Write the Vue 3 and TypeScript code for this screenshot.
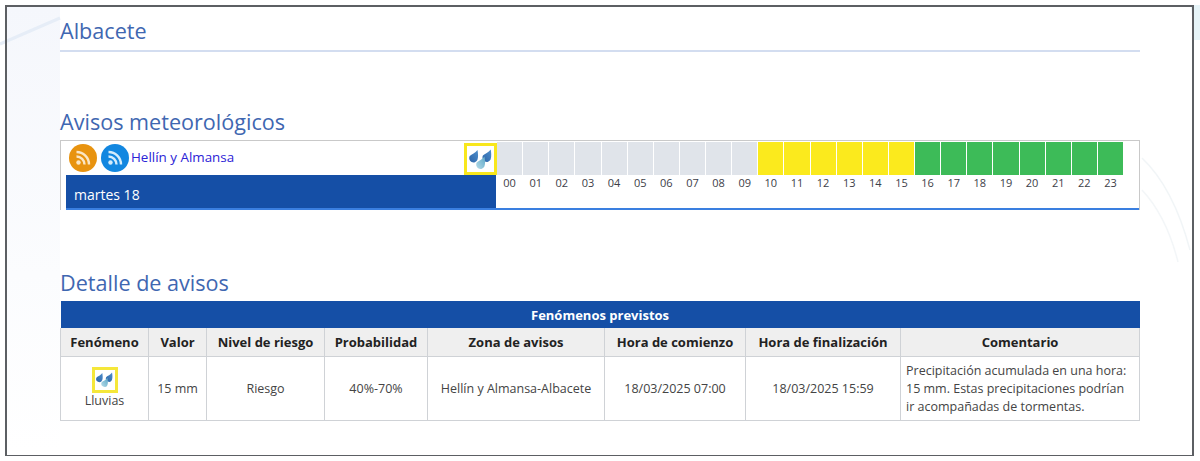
<script setup lang="ts">
const hours = Array.from({ length: 24 }, (_, i) => ({
  label: String(i).padStart(2, '0'),
  level: i < 10 ? 'none' : i < 16 ? 'yellow' : 'green',
}))

const columns = ['Fenómeno', 'Valor', 'Nivel de riesgo', 'Probabilidad', 'Zona de avisos', 'Hora de comienzo', 'Hora de finalización', 'Comentario']

const dropPath = 'M8.500 0C9 3 9.500 6.500 8.400 10A4.300 4.300 0 0 1 0.700 6.100C2.700 4.300 6.300 3.200 8.500 0Z'
const drops = [
  { move: 'translate(0 1)', fill: 'url(#dropDark)' },
  { move: 'translate(13.200 0.500)', fill: 'url(#dropDark)' },
  { move: 'translate(7 7.500)', fill: 'url(#dropLight)' },
]
</script>

<template>
  <div class="page">
    <svg class="decor" width="1200" height="461" viewBox="0 0 1200 461" fill="none">
      <defs>
        <linearGradient id="leftTint" x1="0" y1="0" x2="0" y2="1">
          <stop offset="0" stop-color="#f5f7fc" />
          <stop offset="0.6" stop-color="#fbfcfe" />
          <stop offset="1" stop-color="#ffffff" />
        </linearGradient>
        <linearGradient id="dropDark" x1="1" y1="0" x2="0" y2="1">
          <stop offset="0" stop-color="#4f8fcb" />
          <stop offset="1" stop-color="#2c64a8" />
        </linearGradient>
        <linearGradient id="dropLight" x1="1" y1="0" x2="0" y2="1">
          <stop offset="0" stop-color="#5fa8c8" />
          <stop offset="1" stop-color="#b4dbe8" />
        </linearGradient>
      </defs>
      <rect x="7" y="7" width="53" height="445" fill="url(#leftTint)" />
      <path d="M0 44 L60 18" stroke="#e6edf7" stroke-width="3" />
      <path d="M1142 158 C1160 175 1178 205 1190 250" stroke="#f1f5f7" stroke-width="1.500" />
      <path d="M1142 190 C1156 205 1170 230 1178 262" stroke="#f3f6f8" stroke-width="1.500" />
      <path d="M1191 5 L1200 5 L1200 40 L1194 40 Z" fill="#e6f4f8" />
    </svg>

    <main class="content">
      <h1 class="title province">Albacete</h1>

      <h2 class="title warnings">Avisos meteorológicos</h2>
      <section class="timeline">
        <div class="zone">
          <div class="feeds">
            <svg class="rss" viewBox="0 0 28 28">
              <circle cx="14" cy="14" r="14" fill="#e8930f" />
              <circle cx="9.500" cy="18.500" r="2.200" fill="#fbe6c4" />
              <path d="M7.500 12.500a8 8 0 0 1 8 8M7.500 8a12.500 12.500 0 0 1 12.500 12.500" stroke="#fbe6c4" stroke-width="2.400" fill="none" />
            </svg>
            <svg class="rss" viewBox="0 0 28 28">
              <circle cx="14" cy="14" r="14" fill="#1287e0" />
              <circle cx="9.500" cy="18.500" r="2.200" fill="#d4ecfb" />
              <path d="M7.500 12.500a8 8 0 0 1 8 8M7.500 8a12.500 12.500 0 0 1 12.500 12.500" stroke="#d4ecfb" stroke-width="2.400" fill="none" />
            </svg>
            <a class="zone-link">Hellín y Almansa</a>
          </div>
          <div class="day">martes 18</div>
          <div class="zone-icon">
            <svg width="23" height="21" viewBox="0 0 23 21">
              <path v-for="drop in drops" :key="drop.move" :d="dropPath" :transform="drop.move" :fill="drop.fill" />
            </svg>
          </div>
        </div>
        <div class="hours">
          <div v-for="hour in hours" :key="hour.label" class="hour">
            <span class="cell" :class="hour.level"></span>
            <span class="hour-label">{{ hour.label }}</span>
          </div>
        </div>
      </section>

      <h2 class="title details">Detalle de avisos</h2>
      <table class="detail-table">
        <colgroup>
          <col style="width: 88px" />
          <col style="width: 58px" />
          <col style="width: 118px" />
          <col style="width: 103px" />
          <col style="width: 177px" />
          <col style="width: 141px" />
          <col style="width: 155px" />
          <col style="width: 239px" />
        </colgroup>
        <thead>
          <tr>
            <th class="banner" colspan="8">Fenómenos previstos</th>
          </tr>
          <tr>
            <th v-for="col in columns" :key="col" class="head">{{ col }}</th>
          </tr>
        </thead>
        <tbody>
          <tr>
            <td>
              <span class="small-icon">
                <svg width="17" height="16" viewBox="0 0 23 21">
                  <path v-for="drop in drops" :key="drop.move" :d="dropPath" :transform="drop.move" :fill="drop.fill" />
                </svg>
              </span>
              <div class="phenomenon">Lluvias</div>
            </td>
            <td>15 mm</td>
            <td>Riesgo</td>
            <td>40%-70%</td>
            <td>Hellín y Almansa-Albacete</td>
            <td>18/03/2025 07:00</td>
            <td>18/03/2025 15:59</td>
            <td class="comment">Precipitación acumulada en una hora: 15 mm. Estas precipitaciones podrían ir acompañadas de tormentas.</td>
          </tr>
        </tbody>
      </table>
    </main>
  </div>
</template>

<style scoped>
.page {
  position: relative;
  width: 1200px;
  height: 461px;
  box-sizing: border-box;
  padding: 5px 6px 5px 5px;
  background: #fff;
  font-family: "Open Sans", "Liberation Sans", sans-serif;
  overflow: hidden;
}

.decor {
  position: absolute;
  top: 0;
  left: 0;
}

.content {
  position: relative;
  height: 451px;
  box-sizing: border-box;
  border: 2px solid #5c5f63;
  border-bottom-width: 1px;
  padding: 0 52px 0 53px;
}

.title {
  margin: 0;
  font-weight: 400;
  font-size: 21.600px;
  line-height: 30px;
  color: #3f67b1;
}

.province {
  padding-top: 9px;
  padding-bottom: 4px;
  border-bottom: 2px solid #d3ddf0;
}

.warnings {
  margin-top: 55px;
  margin-bottom: 3px;
}

.timeline {
  display: flex;
  height: 70px;
  box-sizing: border-box;
  border: 1px solid #c9c9c9;
  border-bottom: 0;
  background: #fff;
}

.zone {
  position: relative;
  width: 430px;
  flex-shrink: 0;
  margin-left: 5px;
  box-sizing: border-box;
  border-bottom: 2px solid #3a7fe0;
}

.feeds {
  display: flex;
  align-items: center;
  height: 34px;
  margin-left: 2.500px;
}

.rss {
  width: 28px;
  height: 28px;
  margin-right: 4.500px;
}

.zone-link {
  margin: -2px 0 0 -2.500px;
  font-size: 13.400px;
  color: #2b22d6;
}

.day {
  height: 33px;
  padding-left: 8px;
  background: #154fa6;
  color: #fff;
  font-size: 14px;
  line-height: 40px;
}

.zone-icon {
  position: absolute;
  top: 2px;
  right: -1px;
  display: flex;
  align-items: center;
  justify-content: center;
  width: 33px;
  height: 32px;
  box-sizing: border-box;
  border: 3px solid #f8e71c;
  background: #fff;
}

.hours {
  display: grid;
  grid-template-columns: repeat(24, 1fr);
  flex: 1;
  padding: 1px 15px 0 1px;
  border-bottom: 2px solid #3a7fe0;
}

.hour {
  display: flex;
  flex-direction: column;
  align-items: center;
}

.cell {
  align-self: flex-start;
  width: calc(100% - 1px);
  height: 33px;
}

.none {
  background: #e0e4ea;
}

.yellow {
  background: #fbea1d;
}

.green {
  background: #3dbb58;
}

.hour-label {
  margin: -1px 1px 0 0;
  font-size: 11px;
  line-height: 18px;
  color: #3d4048;
}

.details {
  margin-top: 58px;
  margin-bottom: 3px;
}

.detail-table {
  width: 1079px;
  table-layout: fixed;
  border-collapse: collapse;
  background: #fff;
  font-size: 12.500px;
  color: #444;
}

.banner {
  height: 27px;
  padding: 0;
  background: #154fa6;
  color: #fff;
  font-size: 13px;
  font-weight: 700;
}

.head {
  height: 28px;
  padding: 0;
  border: 1px solid #cfd2d6;
  border-top: 0;
  background: #efefef;
  color: #222;
  font-size: 13px;
  font-weight: 700;
}

td {
  box-sizing: border-box;
  height: 64px;
  padding: 0;
  border: 1px solid #cfd2d6;
  text-align: center;
}

td.comment {
  padding: 0 5px;
  text-align: left;
  line-height: 18px;
}

.small-icon {
  display: inline-flex;
  align-items: center;
  justify-content: center;
  width: 26px;
  height: 26px;
  margin-top: -2px;
  box-sizing: border-box;
  border: 3px solid #f5e73a;
  vertical-align: top;
}

.phenomenon {
  line-height: 16px;
}
</style>
